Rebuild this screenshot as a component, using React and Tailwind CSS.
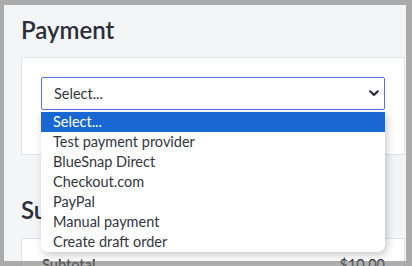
const options = [
  'Select...',
  'Test payment provider',
  'BlueSnap Direct',
  'Checkout.com',
  'PayPal',
  'Manual payment',
  'Create draft order',
]

export default function App() {
  return (
    <div
      className="relative w-[412px] h-[266px] overflow-hidden bg-[#f4f5f7] text-[#2b2f36]"
      style={{ fontFamily: 'Lato, "Noto Sans", sans-serif' }}
    >
      <div className="pl-[21px] pt-[15px] w-[405px]">
        {/* Payment */}
        <h2 className="text-[24px] leading-[30px] font-semibold text-[#2a2e3a]">Payment</h2>
        <div className="mt-[12px] bg-white border border-[#dfe3ea] px-[19px] pt-[19px] pb-[44px]">
          <div className="relative">
            <div className="flex items-center justify-between h-[33px] border border-[#5576e2] rounded-[2px] bg-white pl-[12px] pr-[4px] text-[14.5px] text-[#33363d]">
              <span>Select...</span>
              <svg width="10" height="7" viewBox="0 0 10 7" className="mr-[1px]">
                <path d="M1.2 1.3 L5 5 L8.8 1.3" fill="none" stroke="#2f3138" strokeWidth="2.2" strokeLinecap="round" strokeLinejoin="round" />
              </svg>
            </div>

            {/* open list */}
            <ul className="absolute left-0 right-0 top-[35px] z-10 bg-white rounded-b-[7px] shadow-[2px_3px_8px_rgba(0,0,0,0.22)] overflow-hidden text-[14.5px]">
              {options.map((o, i) => (
                <li
                  key={o}
                  className={
                    'h-[20px] leading-[20px] pl-[12px] ' +
                    (i === 0 ? 'bg-[#1967d2] text-white' : 'text-[#33363d]')
                  }
                >
                  {o}
                </li>
              ))}
            </ul>
          </div>
        </div>

        {/* Summary */}
        <h2 className="mt-[40px] text-[24px] leading-[30px] font-semibold text-[#2a2e3a]">Summary</h2>
        <div className="mt-[13px] bg-white border border-[#dfe3ea] px-[20px] pt-[16px] pb-[20px]">
          <div className="flex justify-between text-[14.5px] leading-[20px]">
            <span className="font-semibold">Subtotal</span>
            <span className="mr-[-1px]">$10.00</span>
          </div>
        </div>
      </div>

      {/* screenshot frame */}
      <div className="absolute inset-0 pointer-events-none border-l-[4px] border-t-[5px] border-r-[6px] border-b-[5px] border-[rgba(120,120,120,0.6)]" />
    </div>
  )
}
